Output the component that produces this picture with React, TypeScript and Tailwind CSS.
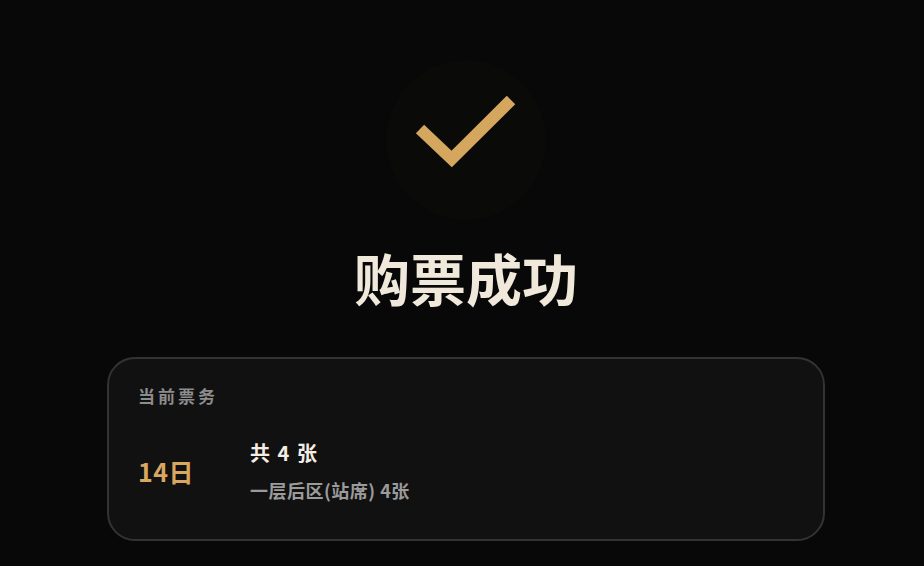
import React from "react";

export default function App() {
  const font = { fontFamily: '"Noto Sans CJK SC", "Noto Sans", sans-serif' };
  return (
    <div
      className="w-[924px] h-[566px] bg-[#080808] flex flex-col items-center overflow-hidden pl-[8px]"
      style={font}
    >
      <div className="mt-[60px] w-[160px] h-[160px] rounded-full bg-[#0a0a09] relative">
        <svg width="160" height="160" viewBox="0 0 160 160" className="absolute left-0 top-0">
          <polyline
            points="34,69 65.7,99 125,40"
            fill="none"
            stroke="#d5a65e"
            strokeWidth="12"
            strokeLinejoin="miter"
            strokeLinecap="butt"
          />
        </svg>
      </div>
      <h1 className="mt-[29px] text-[56px] leading-[56px] font-bold text-[#f0e8da]">
        购票成功
      </h1>
      <div className="mt-[52px] w-[718px] h-[184px] rounded-[28px] border-2 border-[#333333] bg-[#111111] pl-[29px] pt-[25px]">
        <div className="text-[17px] leading-[24px] font-bold text-[#8c8c8c] tracking-[3px]">
          当前票务
        </div>
        <div className="mt-[31px] flex items-center">
          <div className="w-[112px] text-[25px] leading-[32px] font-bold text-[#d9a760] tracking-[0.5px]">14日</div>
          <div className="flex flex-col">
            <div className="text-[20px] leading-[28px] font-bold text-[#f3ede4] tracking-[1.5px]">共 4 张</div>
            <div className="mt-[11px] text-[18px] leading-[24px] font-semibold text-[#9b9b9b] tracking-[0.5px]">
              一层后区(站席) 4张
            </div>
          </div>
        </div>
      </div>
    </div>
  );
}
